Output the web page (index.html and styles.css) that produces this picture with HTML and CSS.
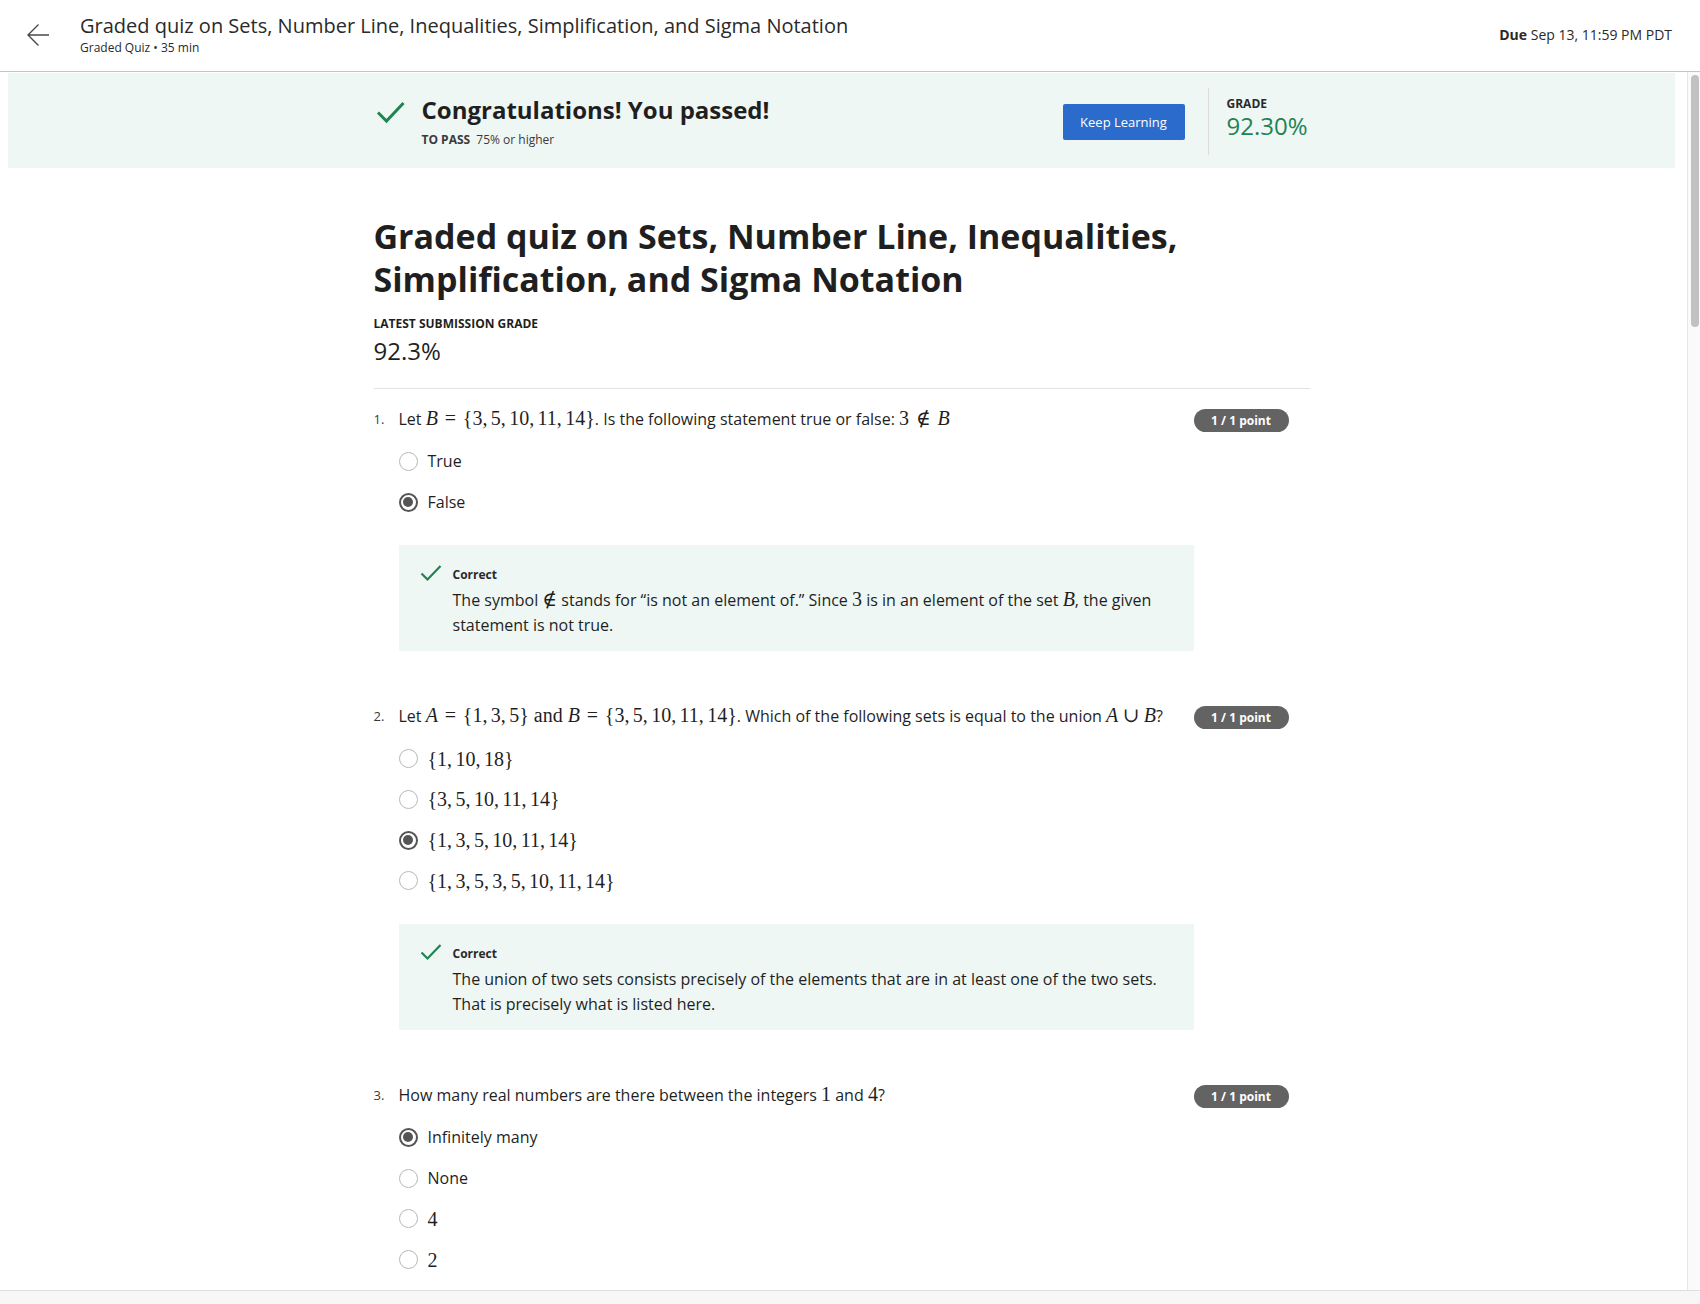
FILE: index.html
```html
<!DOCTYPE html>
<html lang="en">
<head>
<meta charset="utf-8">
<title>Graded quiz</title>
<link rel="stylesheet" href="styles.css">
</head>
<body>
<div class="app">
  <header class="topbar">
    <a class="back" href="#" aria-label="Back">
      <svg width="24" height="24" viewBox="0 0 24 24"><path d="M23 12H2M12.5 1.5L2 12l10.5 10.5" fill="none" stroke="#4a4a4a" stroke-width="1.4"/></svg>
    </a>
    <div class="titles">
      <div class="title">Graded quiz on Sets, Number Line, Inequalities, Simplification, and Sigma Notation</div>
      <div class="sub">Graded Quiz • 35 min</div>
    </div>
    <div class="due"><b>Due</b> Sep 13, 11:59 PM PDT</div>
  </header>

  <div class="scrollwrap">
    <div class="scroller">
      <section class="banner">
        <div class="banner-in">
          <div class="pass">
            <svg class="pass-check" width="30" height="24" viewBox="0 0 30 24"><path d="M2 12.5l8.5 8.5L27.5 3" fill="none" stroke="#1f8354" stroke-width="3"/></svg>
            <div class="pass-text">
              <div class="congrats">Congratulations! You passed!</div>
              <div class="topass"><b>TO PASS</b> 75% or higher</div>
            </div>
          </div>
          <button class="keep">Keep Learning</button>
          <div class="grade">
            <div class="grade-label">GRADE</div>
            <div class="grade-val">92.30%</div>
          </div>
        </div>
      </section>

      <main class="content">
        <h1 class="quiz-title">Graded quiz on Sets, Number Line, Inequalities, Simplification, and Sigma Notation</h1>
        <div class="latest-label">LATEST SUBMISSION GRADE</div>
        <div class="latest-val">92.3%</div>
        <hr class="sep">

        <div class="question">
          <div class="qnum">1.</div>
          <div class="qbody">
            <div class="qtext">Let <span class="m"><i>B</i><span class="rel">=</span>{3,<span class="ts"></span>5,<span class="ts"></span>10,<span class="ts"></span>11,<span class="ts"></span>14}</span>. Is the following statement true or false: <span class="m">3<span class="rel">∉</span><i>B</i></span></div>
            <div class="options">
              <div class="opt"><span class="radio"></span><span>True</span></div>
              <div class="opt"><span class="radio on"></span><span>False</span></div>
            </div>
            <div class="feedback">
              <svg class="fb-check" width="22" height="18" viewBox="0 0 22 18"><path d="M1.5 9.5l6 6L20.5 2" fill="none" stroke="#1f8354" stroke-width="2.2"/></svg>
              <div class="fb-body">
                <div class="fb-title">Correct</div>
                <div class="fb-text">The symbol <span class="m">∉</span> stands for “is not an element of.” Since <span class="m">3</span> is in an element of the set <span class="m"><i>B</i></span>, the given statement is not true.</div>
              </div>
            </div>
          </div>
          <div class="qscore"><span class="badge">1 / 1 point</span></div>
        </div>

        <div class="question">
          <div class="qnum">2.</div>
          <div class="qbody">
            <div class="qtext">Let <span class="m"><i>A</i><span class="rel">=</span>{1,<span class="ts"></span>3,<span class="ts"></span>5}<span class="sp"></span>and<span class="sp"></span><i>B</i><span class="rel">=</span>{3,<span class="ts"></span>5,<span class="ts"></span>10,<span class="ts"></span>11,<span class="ts"></span>14}</span>. Which of the following sets is equal to the union <span class="m"><i>A</i><span class="bin">∪</span><i>B</i></span>?</div>
            <div class="options">
              <div class="opt"><span class="radio"></span><span class="m">{1,<span class="ts"></span>10,<span class="ts"></span>18}</span></div>
              <div class="opt"><span class="radio"></span><span class="m">{3,<span class="ts"></span>5,<span class="ts"></span>10,<span class="ts"></span>11,<span class="ts"></span>14}</span></div>
              <div class="opt"><span class="radio on"></span><span class="m">{1,<span class="ts"></span>3,<span class="ts"></span>5,<span class="ts"></span>10,<span class="ts"></span>11,<span class="ts"></span>14}</span></div>
              <div class="opt"><span class="radio"></span><span class="m">{1,<span class="ts"></span>3,<span class="ts"></span>5,<span class="ts"></span>3,<span class="ts"></span>5,<span class="ts"></span>10,<span class="ts"></span>11,<span class="ts"></span>14}</span></div>
            </div>
            <div class="feedback">
              <svg class="fb-check" width="22" height="18" viewBox="0 0 22 18"><path d="M1.5 9.5l6 6L20.5 2" fill="none" stroke="#1f8354" stroke-width="2.2"/></svg>
              <div class="fb-body">
                <div class="fb-title">Correct</div>
                <div class="fb-text">The union of two sets consists precisely of the elements that are in at least one of the two sets. That is precisely what is listed here.</div>
              </div>
            </div>
          </div>
          <div class="qscore"><span class="badge">1 / 1 point</span></div>
        </div>

        <div class="question">
          <div class="qnum">3.</div>
          <div class="qbody">
            <div class="qtext">How many real numbers are there between the integers <span class="m">1</span> and <span class="m">4</span>?</div>
            <div class="options">
              <div class="opt"><span class="radio on"></span><span>Infinitely many</span></div>
              <div class="opt"><span class="radio"></span><span>None</span></div>
              <div class="opt"><span class="radio"></span><span class="m">4</span></div>
              <div class="opt"><span class="radio"></span><span class="m">2</span></div>
            </div>
          </div>
          <div class="qscore"><span class="badge">1 / 1 point</span></div>
        </div>
      </main>
    </div>
    <div class="vscroll"><div class="thumb"></div></div>
  </div>

  <footer class="bottombar"></footer>
</div>
</body>
</html>
```

FILE: styles.css
```css
html, body {
  margin: 0;
  padding: 0;
  height: 100%;
}
body {
  font-family: "Open Sans", "Noto Sans", sans-serif;
  color: #1f1f1f;
  background: #fff;
}
.app {
  display: flex;
  flex-direction: column;
  height: 100vh;
}

/* Top bar */
.topbar {
  flex: none;
  height: 71px;
  border-bottom: 1px solid #c4c4c4;
  display: flex;
  align-items: flex-start;
  padding: 0 28px 0 26px;
  box-sizing: content-box;
}
.back {
  display: block;
  width: 24px;
  height: 24px;
  margin-top: 23px;
}
.back svg { display: block; }
.titles {
  margin-left: 30px;
  padding-top: 13px;
  flex: 1;
}
.title {
  font-size: 20px;
  line-height: 26px;
  color: #2a2a2a;
}
.sub {
  font-size: 12px;
  line-height: 17px;
  color: #2a2a2a;
}
.due {
  font-size: 14px;
  line-height: 20px;
  margin-top: 25px;
  color: #2a2a2a;
}
.due b { font-weight: 700; }

/* Scroll area */
.scrollwrap {
  flex: 1;
  min-height: 0;
  display: flex;
}
.scroller {
  flex: 1;
  min-width: 0;
  overflow: hidden;
  padding: 1px 12px 0 8px;
}
.vscroll {
  flex: none;
  width: 13px;
  border-left: 1px solid #e6e6e6;
  background: #fafafa;
  padding: 3px 1px 0 3px;
  box-sizing: border-box;
}
.thumb {
  height: 252px;
  border-radius: 5px;
  background: #c1c1c1;
}

/* Banner */
.banner {
  background: #eef7f4;
}
.banner-in {
  width: 936px;
  margin: 0 auto;
  display: flex;
  align-items: center;
  padding: 15px 0 13px;
}
.pass {
  flex: 1;
  display: flex;
  align-items: flex-start;
}
.pass-check {
  display: block;
  margin: 5px 0 0 2px;
}
.pass-text {
  margin-left: 16px;
}
.congrats {
  font-size: 24px;
  line-height: 30px;
  font-weight: 700;
  color: #1f1f1f;
}
.topass {
  font-size: 12px;
  line-height: 16px;
  margin-top: 7px;
  color: #3a3a3a;
}
.topass b { margin-right: 3px; }
.keep {
  font-family: "Open Sans", sans-serif;
  font-size: 13px;
  color: #fff;
  background: #2a6bcb;
  border: none;
  border-radius: 2px;
  width: 122px;
  height: 36px;
  padding: 0;
  margin-right: 23px;
}
.grade {
  border-left: 1px solid #dcdcdc;
  height: 67px;
  padding-left: 18px;
  box-sizing: border-box;
  padding-top: 8px;
  width: 102px;
}
.grade-label {
  font-size: 12px;
  line-height: 16px;
  font-weight: 700;
  color: #2a2a2a;
}
.grade-val {
  font-size: 24px;
  line-height: 28px;
  color: #1f8354;
}

/* Content */
.content {
  width: 936px;
  margin: 0 auto;
  padding-top: 47px;
}
.quiz-title {
  margin: 0;
  font-size: 34px;
  line-height: 43px;
  font-weight: 700;
  color: #1f1f1f;
}
.latest-label {
  margin-top: 15px;
  font-size: 12px;
  line-height: 16px;
  font-weight: 700;
  color: #1f1f1f;
}
.latest-val {
  margin-top: 4px;
  font-size: 24px;
  line-height: 30px;
  color: #1f1f1f;
}
.sep {
  margin: 22px 0 0;
  border: none;
  border-top: 1px solid #e2e2e2;
  height: 0;
}

/* Questions */
.question {
  display: flex;
  padding-top: 18px;
  margin-bottom: 35px;
}
.qnum {
  width: 25px;
  flex: none;
  font-size: 13px;
  line-height: 24px;
  color: #3a3a3a;
}
.qbody {
  width: 795px;
  flex: none;
}
.qscore {
  flex: 1;
  padding-top: 1px;
}
.badge {
  display: inline-block;
  background: #636363;
  color: #fff;
  font-size: 12px;
  font-weight: 700;
  line-height: 23px;
  height: 23px;
  width: 95px;
  text-align: center;
  border-radius: 12px;
}
.qtext {
  font-size: 16px;
  line-height: 24px;
  color: #1f1f1f;
}
.options {
  margin-top: 10px;
}
.opt {
  display: flex;
  align-items: center;
  height: 40.7px;
  font-size: 16px;
  color: #1f1f1f;
}
.radio {
  flex: none;
  width: 19px;
  height: 19px;
  box-sizing: border-box;
  border: 1.5px solid #b8b8b8;
  border-radius: 50%;
  margin-right: 10px;
  position: relative;
}
.radio.on {
  border: 2px solid #555;
}
.radio.on::after {
  content: "";
  position: absolute;
  left: 2.5px;
  top: 2.5px;
  width: 10px;
  height: 10px;
  border-radius: 50%;
  background: #555;
}

/* Math */
.m {
  font-family: "Liberation Serif", "DejaVu Serif", serif;
  font-size: 1.25em;
  line-height: 1;
  color: #1f1f1f;
}
.m i { font-style: italic; }
.rel { margin: 0 0.34em; }
.bin { margin: 0 0.22em; }
.ts { display: inline-block; width: 0.17em; }
.sp { display: inline-block; width: 0.25em; }

/* Feedback */
.feedback {
  margin-top: 23px;
  background: #eef7f4;
  display: flex;
  align-items: flex-start;
  padding: 19px 20px 13px 21px;
}
.fb-check {
  display: block;
  flex: none;
}
.fb-body {
  margin-left: 11px;
  flex: 1;
  padding-top: 3px;
}
.fb-title {
  font-size: 12px;
  line-height: 16px;
  font-weight: 700;
  color: #2a2a2a;
}
.fb-text {
  margin-top: 5px;
  font-size: 16px;
  line-height: 25px;
  color: #1f1f1f;
}

/* Bottom bar */
.bottombar {
  flex: none;
  height: 13px;
  border-top: 1px solid #dedede;
  background: #f7f7f7;
}
```
